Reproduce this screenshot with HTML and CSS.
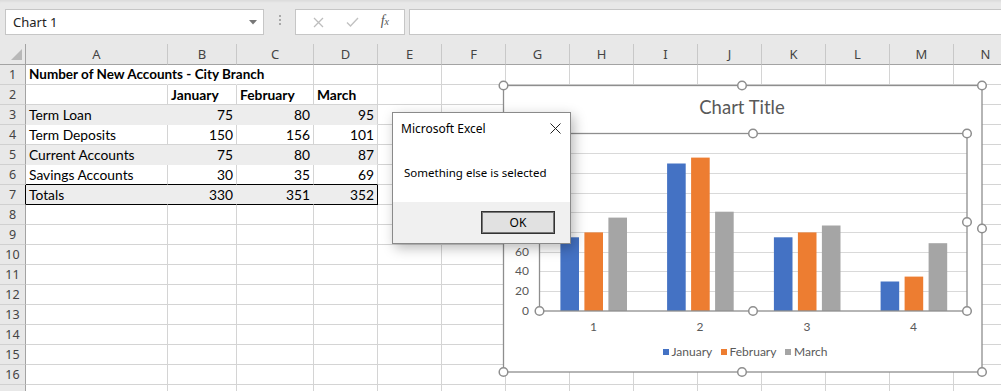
FILE: index.html
```html
<!DOCTYPE html>
<html lang="en">
<head>
    <meta charset="UTF-8">
    <meta name="viewport" content="width=device-width, initial-scale=1.0">
    <title>Book1 - Excel</title>
    <link rel="stylesheet" href="styles.css">
</head>
<body>
    <div class="window">
        <div class="formula-bar">
            <div class="name-box">
                <span>Chart 1</span>
                <svg class="drop" width="8" height="5" viewBox="0 0 8 5"><path d="M0 0H8L4 4.5Z"/></svg>
            </div>
            <div class="grip"><i></i><i></i><i></i></div>
            <div class="fx-buttons">
                <svg width="11" height="11" viewBox="0 0 11 11"><path d="M1 1L10 10M10 1L1 10" stroke="#bdbdbd" stroke-width="1.3"/></svg>
                <svg width="13" height="10" viewBox="0 0 13 10"><path d="M1 5.5L4.5 9L12 1" fill="none" stroke="#c2c2c2" stroke-width="1.4"/></svg>
                <span class="fx">f<span>x</span></span>
            </div>
            <div class="formula-input"></div>
        </div>

        <div class="sheet">
            <div class="row head">
                <div class="corner"><svg width="11" height="11" viewBox="0 0 11 11"><path d="M11 0V11H0Z" fill="#b8b8b8"/></svg></div>
                <div>A</div><div>B</div><div>C</div><div>D</div><div>E</div><div>F</div><div>G</div>
                <div>H</div><div>I</div><div>J</div><div>K</div><div>L</div><div>M</div><div>N</div>
            </div>
            <div class="row">
                <div class="rh">1</div>
                <div class="b over">Number of New Accounts - City Branch</div><div class="over"></div><div></div><div></div>
                <div></div><div></div><div></div><div></div><div></div><div></div><div></div><div></div><div></div><div></div>
            </div>
            <div class="row">
                <div class="rh">2</div>
                <div></div><div class="b">January</div><div class="b">February</div><div class="b">March</div>
                <div></div><div></div><div></div><div></div><div></div><div></div><div></div><div></div><div></div><div></div>
            </div>
            <div class="row">
                <div class="rh">3</div>
                <div class="fill">Term Loan</div><div class="fill num">75</div><div class="fill num">80</div><div class="fill num last">95</div>
                <div></div><div></div><div></div><div></div><div></div><div></div><div></div><div></div><div></div><div></div>
            </div>
            <div class="row">
                <div class="rh">4</div>
                <div>Term Deposits</div><div class="num">150</div><div class="num">156</div><div class="num">101</div>
                <div></div><div></div><div></div><div></div><div></div><div></div><div></div><div></div><div></div><div></div>
            </div>
            <div class="row">
                <div class="rh">5</div>
                <div class="fill">Current Accounts</div><div class="fill num">75</div><div class="fill num">80</div><div class="fill num last">87</div>
                <div></div><div></div><div></div><div></div><div></div><div></div><div></div><div></div><div></div><div></div>
            </div>
            <div class="row">
                <div class="rh">6</div>
                <div class="above-total">Savings Accounts</div><div class="num above-total">30</div><div class="num above-total">35</div><div class="num above-total">69</div>
                <div></div><div></div><div></div><div></div><div></div><div></div><div></div><div></div><div></div><div></div>
            </div>
            <div class="row total">
                <div class="rh">7</div>
                <div class="fill">Totals</div><div class="fill num">330</div><div class="fill num">351</div><div class="fill num last">352</div>
                <div></div><div></div><div></div><div></div><div></div><div></div><div></div><div></div><div></div><div></div>
            </div>
            <div class="row"><div class="rh">8</div><div></div><div></div><div></div><div></div><div></div><div></div><div></div><div></div><div></div><div></div><div></div><div></div><div></div><div></div></div>
            <div class="row"><div class="rh">9</div><div></div><div></div><div></div><div></div><div></div><div></div><div></div><div></div><div></div><div></div><div></div><div></div><div></div><div></div></div>
            <div class="row"><div class="rh">10</div><div></div><div></div><div></div><div></div><div></div><div></div><div></div><div></div><div></div><div></div><div></div><div></div><div></div><div></div></div>
            <div class="row"><div class="rh">11</div><div></div><div></div><div></div><div></div><div></div><div></div><div></div><div></div><div></div><div></div><div></div><div></div><div></div><div></div></div>
            <div class="row"><div class="rh">12</div><div></div><div></div><div></div><div></div><div></div><div></div><div></div><div></div><div></div><div></div><div></div><div></div><div></div><div></div></div>
            <div class="row"><div class="rh">13</div><div></div><div></div><div></div><div></div><div></div><div></div><div></div><div></div><div></div><div></div><div></div><div></div><div></div><div></div></div>
            <div class="row"><div class="rh">14</div><div></div><div></div><div></div><div></div><div></div><div></div><div></div><div></div><div></div><div></div><div></div><div></div><div></div><div></div></div>
            <div class="row"><div class="rh">15</div><div></div><div></div><div></div><div></div><div></div><div></div><div></div><div></div><div></div><div></div><div></div><div></div><div></div><div></div></div>
            <div class="row"><div class="rh">16</div><div></div><div></div><div></div><div></div><div></div><div></div><div></div><div></div><div></div><div></div><div></div><div></div><div></div><div></div></div>
            <div class="row"><div class="rh"></div><div></div><div></div><div></div><div></div><div></div><div></div><div></div><div></div><div></div><div></div><div></div><div></div><div></div><div></div></div>
        </div>

        <!-- chart object, drawn in sheet pixel coordinates -->
        <svg class="chart" width="505" height="305" viewBox="490 76 505 305">
            <rect x="503.5" y="85.5" width="478.5" height="286.5" fill="#fff" stroke="#8e8e8e" stroke-width="1.3"/>
            <text class="title" x="742" y="113.5" text-anchor="middle">Chart Title</text>

            <g stroke="#d9d9d9" stroke-width="1">
                <line x1="540" x2="967" y1="291.5" y2="291.5"/>
                <line x1="540" x2="967" y1="271.5" y2="271.5"/>
                <line x1="540" x2="967" y1="252.5" y2="252.5"/>
                <line x1="540" x2="967" y1="232.5" y2="232.5"/>
                <line x1="540" x2="967" y1="212.5" y2="212.5"/>
                <line x1="540" x2="967" y1="193.5" y2="193.5"/>
                <line x1="540" x2="967" y1="173.5" y2="173.5"/>
                <line x1="540" x2="967" y1="153.5" y2="153.5"/>
            </g>

            <g fill="#4472c4">
                <rect x="560.4" y="237.3" width="18.6" height="73.7"/>
                <rect x="667.1" y="163.5" width="18.6" height="147.5"/>
                <rect x="773.9" y="237.3" width="18.6" height="73.7"/>
                <rect x="880.6" y="281.5" width="18.6" height="29.5"/>
            </g>
            <g fill="#ed7d31">
                <rect x="584.4" y="232.4" width="18.6" height="78.6"/>
                <rect x="691.1" y="157.6" width="18.6" height="153.4"/>
                <rect x="797.9" y="232.4" width="18.6" height="78.6"/>
                <rect x="904.6" y="276.6" width="18.6" height="34.4"/>
            </g>
            <g fill="#a5a5a5">
                <rect x="608.4" y="217.6" width="18.6" height="93.4"/>
                <rect x="715.1" y="211.7" width="18.6" height="99.3"/>
                <rect x="821.9" y="225.5" width="18.6" height="85.5"/>
                <rect x="928.6" y="243.2" width="18.6" height="67.8"/>
            </g>

            <rect x="539.5" y="133.5" width="427.5" height="177.5" fill="none" stroke="#8e8e8e" stroke-width="1.3"/>

            <!-- labels above 60 sit under the message box -->
            <g class="axis" text-anchor="end">
                <text x="529" y="315">0</text>
                <text x="529" y="295">20</text>
                <text x="529" y="275">40</text>
                <text x="529" y="256">60</text>
            </g>
            <g class="axis" text-anchor="middle">
                <text x="593.4" y="331">1</text>
                <text x="700.1" y="331">2</text>
                <text x="806.9" y="331">3</text>
                <text x="913.6" y="331">4</text>
            </g>

            <g class="axis">
                <rect x="663" y="349" width="6" height="6" fill="#4472c4"/>
                <text x="671.5" y="356">January</text>
                <rect x="721" y="349" width="6" height="6" fill="#ed7d31"/>
                <text x="729.5" y="356">February</text>
                <rect x="785" y="349" width="6" height="6" fill="#a5a5a5"/>
                <text x="794" y="356">March</text>
            </g>

            <g fill="#fff" stroke="#8e8e8e" stroke-width="1.5">
                <circle cx="503.5" cy="85.5" r="4.3"/>
                <circle cx="742" cy="85.5" r="4.3"/>
                <circle cx="982" cy="85.5" r="4.3"/>
                <circle cx="503.5" cy="228.5" r="4.3"/>
                <circle cx="982" cy="228.5" r="4.3"/>
                <circle cx="503.5" cy="372" r="4.3"/>
                <circle cx="742" cy="372" r="4.3"/>
                <circle cx="982" cy="372" r="4.3"/>
                <circle cx="539.5" cy="133.5" r="4.3"/>
                <circle cx="753" cy="133.5" r="4.3"/>
                <circle cx="967" cy="133.5" r="4.3"/>
                <circle cx="539.5" cy="222" r="4.3"/>
                <circle cx="967" cy="222" r="4.3"/>
                <circle cx="539.5" cy="311" r="4.3"/>
                <circle cx="753" cy="311" r="4.3"/>
                <circle cx="967" cy="311" r="4.3"/>
            </g>
        </svg>

        <div class="msgbox">
            <div class="msgbox-title">
                <span>Microsoft Excel</span>
                <svg width="11" height="11" viewBox="0 0 11 11"><path d="M0.5 0.5L10.5 10.5M10.5 0.5L0.5 10.5" stroke="#222" stroke-width="1"/></svg>
            </div>
            <div class="msgbox-body">Something else is selected</div>
            <div class="msgbox-footer">
                <button class="ok-button">OK</button>
            </div>
        </div>
    </div>
</body>
</html>
```

FILE: styles.css
```css
body {
    margin: 0;
    background-color: #fff;
}
.window {
    position: relative;
    width: 1001px;
    height: 391px;
    overflow: hidden;
    font-family: Lato, 'Liberation Sans', sans-serif;
    color: #000;
}

/* formula bar */
.formula-bar {
    display: flex;
    align-items: flex-start;
    height: 44px;
    box-sizing: border-box;
    padding: 9px 0 0 5px;
    background-color: #e8e8e8;
    box-shadow: inset 0 3px 3px -2px rgba(0, 0, 0, 0.08);
}
.name-box {
    display: flex;
    align-items: center;
    justify-content: space-between;
    width: 259px;
    height: 26px;
    box-sizing: border-box;
    padding: 0 6px 0 7px;
    background-color: #fff;
    border: 1px solid #c6c6c6;
    font-family: 'Noto Sans', sans-serif;
    font-size: 13px;
    color: #222;
}
.drop path {
    fill: #777;
}
.grip {
    display: flex;
    flex-direction: column;
    gap: 2px;
    width: 31px;
    align-items: center;
    padding-top: 6px;
}
.grip i {
    display: block;
    width: 2px;
    height: 2px;
    background-color: #a9a9a9;
}
.fx-buttons {
    display: flex;
    align-items: center;
    justify-content: space-around;
    width: 110px;
    height: 26px;
    box-sizing: border-box;
    padding: 0 4px 0 6px;
    background-color: #fff;
    border: 1px solid #c6c6c6;
}
.fx {
    font-family: 'Liberation Serif', serif;
    font-style: italic;
    font-size: 14px;
    color: #555;
    padding-bottom: 2px;
}
.fx span {
    font-size: 10px;
}
.formula-input {
    flex: 1;
    height: 26px;
    margin-left: 4px;
    box-sizing: border-box;
    background-color: #fff;
    border: 1px solid #c6c6c6;
    border-right: none;
}

/* grid */
.row {
    display: grid;
    grid-template-columns: 26px 142px 69px 77px 64px repeat(10, 64px);
    height: 20px;
}
.row > div {
    box-sizing: border-box;
    border-right: 1px solid #d4d4d4;
    border-bottom: 1px solid #d4d4d4;
    padding: 0 3px;
    font-size: 13.8px;
    line-height: 19px;
    white-space: nowrap;
}
.row.head {
    height: 21px;
    background-color: #e8e8e8;
}
.row.head > div {
    border-right-color: #c8c8c8;
    border-bottom-color: #a3a3a3;
    text-align: center;
    font-family: 'Noto Sans', sans-serif;
    font-size: 13px;
    line-height: 20px;
    color: #444;
}
.row.head > .corner {
    display: flex;
    align-items: flex-end;
    justify-content: flex-end;
    padding: 0 3px 4px 0;
    border-right-color: #a3a3a3;
}
.row > .rh {
    padding: 0;
    background-color: #e8e8e8;
    border-right-color: #a3a3a3;
    border-bottom-color: #d0d0d0;
    text-align: center;
    font-family: 'Noto Sans', sans-serif;
    font-size: 12.5px;
    color: #444;
}
.b {
    font-weight: bold;
}
.row > .b.over {
    font-size: 13.5px;
}
.row > .over {
    overflow: visible;
    border-right-color: transparent;
}
.row > .num {
    text-align: right;
}
.row > .fill {
    background-color: #ededed;
    border-right-color: #ededed;
    border-bottom-color: #ededed;
}
.row > .fill.last {
    border-right-color: #d4d4d4;
}
.row > .above-total {
    border-bottom-color: #000;
}
.row.total > .fill {
    border-bottom-color: #000;
}
.row.total > .fill.last {
    border-right-color: #000;
}
.row.total > .rh {
    border-right-color: #000;
}

/* chart */
.chart {
    position: absolute;
    left: 490px;
    top: 76px;
}
.chart text {
    font-family: Lato, 'Liberation Sans', sans-serif;
    fill: #595959;
}
.chart .title {
    font-size: 18.5px;
}
.chart .axis text {
    font-size: 12px;
}

/* message box */
.msgbox {
    position: absolute;
    left: 392px;
    top: 112px;
    width: 179px;
    height: 132px;
    box-sizing: border-box;
    display: flex;
    flex-direction: column;
    background-color: #fff;
    border: 1px solid #8a8a8a;
    box-shadow: 3px 4px 12px rgba(0, 0, 0, 0.28);
    font-family: 'Noto Sans', sans-serif;
    font-size: 11.5px;
    color: #000;
}
.msgbox-title {
    display: flex;
    align-items: center;
    justify-content: space-between;
    height: 30px;
    padding: 0 9px 0 8px;
    font-size: 12px;
}
.msgbox-body {
    flex: 1;
    padding: 22px 0 0 11px;
    line-height: 16px;
}
.msgbox-footer {
    display: flex;
    justify-content: flex-end;
    height: 41px;
    box-sizing: border-box;
    padding: 9px 15px 0 0;
    background-color: #f0f0f0;
}
.ok-button {
    width: 74px;
    height: 23px;
    padding: 0;
    background-color: #e1e1e1;
    border: 1px solid #333;
    box-shadow: inset 0 0 0 1px #777;
    font-family: 'Noto Sans', sans-serif;
    font-size: 12px;
    color: #000;
}
```
